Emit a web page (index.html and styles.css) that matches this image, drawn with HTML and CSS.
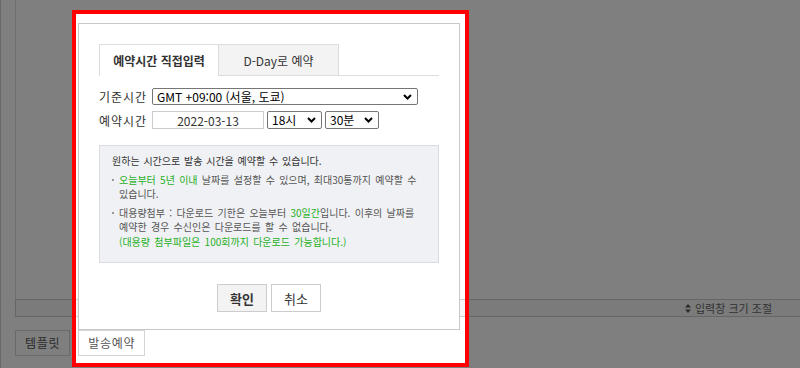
FILE: index.html
```html
<!DOCTYPE html>
<html lang="ko">
<head>
<meta charset="utf-8">
<title>발송예약</title>
<link rel="stylesheet" href="styles.css">
</head>
<body>
<div class="page">
  <div class="editor"></div>
  <div class="resize-bar">
    <svg class="resize-icon" width="6" height="9" viewBox="0 0 6 9"><path d="M0 3.5L3 0L6 3.5Z M0 5.5L6 5.5L3 9Z" fill="#555"/></svg>
    <span>입력창 크기 조절</span>
  </div>
  <div class="toolbar">
    <button class="tool-btn">템플릿</button>
    <button class="tool-btn">발송예약</button>
  </div>
</div>

<div class="highlight"></div>

<div class="dialog">
  <div class="tabs">
    <div class="tab active">예약시간 직접입력</div>
    <div class="tab">D-Day로 예약</div>
  </div>

  <div class="form">
    <div class="row">
      <span class="label">기준시간</span>
      <div class="select wide">
        <select><option>GMT +09:00 (서울, 도쿄)</option></select>
        <svg class="chev" width="9" height="6" viewBox="0 0 9 6"><path d="M1 1L4.5 4.5L8 1" fill="none" stroke="#000" stroke-width="2"/></svg>
      </div>
    </div>
    <div class="row">
      <span class="label">예약시간</span>
      <input class="date" type="text" value="2022-03-13">
      <div class="select hour">
        <select><option>18시</option></select>
        <svg class="chev" width="9" height="6" viewBox="0 0 9 6"><path d="M1 1L4.5 4.5L8 1" fill="none" stroke="#000" stroke-width="2"/></svg>
      </div>
      <div class="select minute">
        <select><option>30분</option></select>
        <svg class="chev" width="9" height="6" viewBox="0 0 9 6"><path d="M1 1L4.5 4.5L8 1" fill="none" stroke="#000" stroke-width="2"/></svg>
      </div>
    </div>
  </div>

  <div class="info">
    <p class="lead">원하는 시간으로 발송 시간을 예약할 수 있습니다.</p>
    <ul>
      <li><span class="dot"></span><span><em class="green">오늘부터 5년 이내</em> 날짜를 설정할 수 있으며, 최대30통까지 예약할 수<br>있습니다.</span></li>
      <li><span class="dot"></span><span>대용량첨부 : 다운로드 기한은 오늘부터 <em class="green">30일간</em>입니다. 이후의 날짜를<br>예약한 경우 수신인은 다운로드를 할 수 없습니다.<br><em class="green">(대용량 첨부파일은 100회까지 다운로드 가능합니다.)</em></span></li>
    </ul>
  </div>

  <div class="actions">
    <button class="btn primary">확인</button>
    <button class="btn">취소</button>
  </div>
</div>
</body>
</html>
```

FILE: styles.css
```css
* { box-sizing: border-box; }

body {
  margin: 0;
  width: 800px;
  height: 368px;
  overflow: hidden;
  position: relative;
  background: #fff;
  font-family: "Noto Sans CJK KR", "Noto Sans", sans-serif;
  color: #333;
}

button, input, select {
  font-family: inherit;
}

/* underlying page */
.page {
  height: 368px;
  border-left: 1px solid #d4d4d4;
  padding-left: 14px;
}

.editor {
  height: 299px;
  border-left: 1px solid #dcdcdc;
}

.resize-bar {
  height: 18px;
  border: 1px solid #cdcdcd;
  border-right: 0;
  background: #f7f7f7;
  display: flex;
  justify-content: flex-end;
  align-items: center;
  gap: 4px;
  padding-right: 28px;
  font-size: 11px;
  color: #666;
}

.toolbar {
  display: flex;
  gap: 8px;
  margin-top: 13px;
}

.tool-btn {
  height: 26px;
  padding: 0 9px;
  border: 1px solid #d5d5d5;
  background: #fff;
  color: #555;
  font-size: 12px;
  letter-spacing: 0.7px;
  line-height: 1;
}

/* highlight overlay */
.highlight {
  position: absolute;
  left: 72px;
  top: 10px;
  width: 397px;
  height: 357px;
  border: 4px solid #ff0000;
  box-shadow: 0 0 0 900px rgba(0, 0, 0, 0.5);
  z-index: 5;
}

/* dialog */
.dialog {
  position: absolute;
  left: 78px;
  top: 23px;
  width: 382px;
  height: 307px;
  border: 1px solid #c8c8c8;
  background: #fff;
  padding: 20px 20px 0;
  display: flex;
  flex-direction: column;
  z-index: 6;
}

.tabs {
  display: flex;
  border-bottom: 1px solid #dddddd;
  height: 32px;
}

.tab {
  width: 120px;
  height: 31px;
  border: 1px solid #dddddd;
  border-bottom: 0;
  display: flex;
  align-items: center;
  justify-content: center;
  font-size: 12px;
  color: #333;
  background: #f3f3f3;
  border-left: 0;
}

.tab.active {
  height: 32px;
  border-left: 1px solid #dddddd;
  background: #fff;
  font-weight: bold;
}

.form {
  margin-top: 12px;
  display: flex;
  flex-direction: column;
  gap: 6px;
}

.row {
  display: flex;
  align-items: center;
  gap: 3px;
}

.label {
  width: 50px;
  font-size: 12px;
  letter-spacing: 1px;
  color: #333;
  white-space: nowrap;
}

.select {
  display: flex;
  align-items: center;
  border: 1px solid #767676;
  border-radius: 2px;
  height: 18px;
  padding: 0 5px 0 4px;
  background: #fff;
}

.select select {
  appearance: none;
  -webkit-appearance: none;
  border: 0;
  background: transparent;
  padding: 0;
  margin: 0;
  font-size: 12px;
  color: #000;
  flex: 1;
  min-width: 0;
  outline: none;
  height: 16px;
  line-height: 16px;
}

.chev { flex: none; }

.select.wide { width: 266px; height: 17px; }
.select.hour { width: 55px; }
.select.minute { width: 54px; }

.date {
  width: 112px;
  height: 18px;
  border: 1px solid #cccccc;
  padding: 0;
  text-align: center;
  font-size: 12px;
  color: #333;
}

.info {
  margin-top: 16px;
  background: #f0f1f4;
  border: 1px solid #dadbe0;
  padding: 8px 12px 13px;
  font-size: 10px;
  word-spacing: 1.5px;
  line-height: 14px;
  color: #555;
  white-space: nowrap;
}

.info .lead {
  margin: 0;
  color: #333;
  word-spacing: 1px;
}

.info ul {
  margin: 0;
  padding: 0;
  list-style: none;
}

.info li {
  display: flex;
  margin-top: 5px;
}

.info li + li .green:last-child {
  display: inline-block;
  margin-top: 1px;
}

.dot {
  flex: none;
  width: 2px;
  height: 2px;
  background: #999;
  margin: 6px 5px 0 0;
}

.green {
  font-style: normal;
  color: #1fb01f;
}

.actions {
  display: flex;
  justify-content: center;
  gap: 4px;
  margin-top: 21px;
}

.btn {
  height: 28px;
  padding: 0 12px;
  border: 1px solid #cccccc;
  background: #fff;
  color: #333;
  font-size: 13px;
  line-height: 1;
}

.btn.primary {
  background: #f3f3f3;
  font-weight: bold;
}
```
